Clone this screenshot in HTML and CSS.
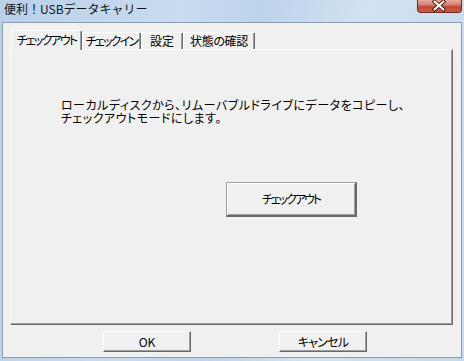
FILE: index.html
```html
<!DOCTYPE html>
<html lang="ja">
<head>
<meta charset="utf-8">
<title>便利！USBデータキャリー</title>
<link rel="stylesheet" href="styles.css">
</head>
<body>
<div class="window">
  <div class="titlebar">
    <span class="title">便利！USBデータキャリー</span>
    <div class="close">
      <svg width="45" height="13" viewBox="0 0 45 13">
        <path d="M18 2.5 L27 10.5 M27 2.5 L18 10.5" stroke="#4a1a14" stroke-width="4" stroke-linecap="square" fill="none"/>
        <path d="M18 2.5 L27 10.5 M27 2.5 L18 10.5" stroke="#ffffff" stroke-width="2" stroke-linecap="square" fill="none"/>
      </svg>
    </div>
  </div>
  <div class="client">
    <div class="tabs">
      <div class="tab selected tab-checkout">チェックアウト</div>
      <div class="tab tab-checkin">チェックイン</div>
      <div class="tab tab-settings">設定</div>
      <div class="tab tab-status">状態の確認</div>
    </div>
    <div class="panel">
      <p class="desc">ローカルディスクから、リムーバブルドライブにデータをコピーし、<br>チェックアウトモードにします。</p>
      <button class="btn big">チェックアウト</button>
    </div>
    <div class="footer">
      <button class="btn small">OK</button>
      <button class="btn small cancel">キャンセル</button>
    </div>
  </div>
</div>
</body>
</html>
```
FILE: styles.css
```css
* { box-sizing: border-box; }
html, body { margin: 0; padding: 0; }
body {
  width: 464px;
  height: 361px;
  overflow: hidden;
  font-family: "Noto Sans CJK JP", "Noto Sans", sans-serif;
  font-size: 12px;
  color: #000;
}
.window {
  width: 464px;
  height: 361px;
  display: flex;
  flex-direction: column;
  padding: 0 2px 3px 2px;
  background: linear-gradient(100deg, #b9d0e9 0%, #c9dcf0 35%, #bcd3eb 50%, #d3e2f2 70%, #c6d9ee 100%);
}
.titlebar {
  height: 22px;
  flex: none;
  display: flex;
  justify-content: space-between;
  align-items: flex-start;
}
.title {
  padding: 1px 0 0 2px;
  line-height: 16px;
  font-size: 12px;
  color: #141414;
}
.close {
  width: 45px;
  height: 13px;
  border: 1px solid #6e2b22;
  border-top: none;
  border-radius: 0 0 4px 4px;
  background: linear-gradient(#e7a99c 0%, #d67f6e 40%, #bf4a36 55%, #cc5d45 100%);
  display: flex;
}
.close svg { display: block; margin: -1px 0 0 -1px; }
.client {
  flex: 1;
  display: flex;
  flex-direction: column;
  background: #f0f0f0;
  border: 1px solid #8f9cad;
  padding: 7px 8px 5px 7px;
}
.tabs {
  height: 19px;
  flex: none;
  display: flex;
  align-items: flex-end;
  padding-left: 1px;
  font-feature-settings: "palt";
}
.tab {
  height: 17px;
  padding: 0;
  line-height: 15px;
  text-align: center;
  background: #f0f0f0;
  border-top: 1px solid #fff;
  border-left: 1px solid #fff;
  border-right: 1px solid #696969;
  border-radius: 2px 2px 0 0;
  box-shadow: inset -1px 0 0 #a0a0a0;
  white-space: nowrap;
  letter-spacing: -1.8px;
}
.tab.selected {
  height: 20px;
  margin-bottom: -1px;
  line-height: 17px;
  position: relative;
  z-index: 1;
}
.tab-checkout { width: 71px; }
.tab-checkin { width: 59px; }
.tab-settings { width: 42px; letter-spacing: 0; }
.tab-status { width: 72px; letter-spacing: -0.3px; }
.panel {
  flex: 1;
  display: flex;
  flex-direction: column;
  align-items: flex-start;
  background: #f0f0f0;
  border-style: solid;
  border-width: 1px;
  border-color: #fff #696969 #696969 #fff;
  box-shadow: inset -1px -1px 0 #a0a0a0;
}
.desc {
  margin: 48px 0 0 0;
  padding-left: 50px;
  line-height: 13px;
  font-size: 12px;
  font-feature-settings: "palt";
  letter-spacing: 0.5px;
  white-space: nowrap;
}
.btn {
  font-family: inherit;
  font-size: 12px;
  font-feature-settings: "palt";
  color: #000;
  background: #f0f0f0;
  padding: 0;
  margin: 0;
  line-height: 14px;
}
.big {
  width: 131px;
  height: 35px;
  margin: 58px 0 0 215px;
  letter-spacing: -2px;
  border-style: solid;
  border-width: 1px 2px 2px 1px;
  border-color: #a0a0a0 #696969 #696969 #a0a0a0;
  box-shadow: inset 1px 1px 0 #fff, inset -1px -1px 0 #a0a0a0;
}
.footer {
  height: 21px;
  flex: none;
  margin-top: 6px;
  display: flex;
  gap: 88px;
  padding-left: 93px;
}
.small {
  width: 88px;
  height: 21px;
  border-style: solid;
  border-width: 1px;
  border-color: #fff #696969 #696969 #fff;
  box-shadow: inset -1px -1px 0 #a0a0a0;
}
.cancel { letter-spacing: -0.8px; }
```
